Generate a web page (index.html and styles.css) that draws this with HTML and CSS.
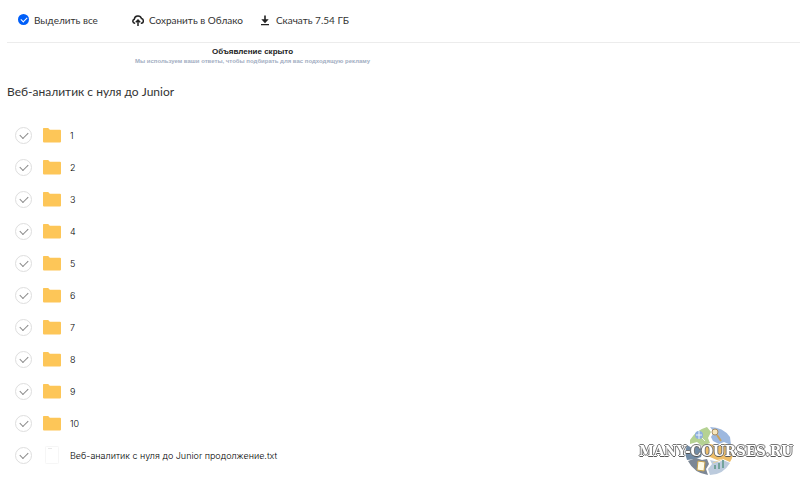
FILE: index.html
```html
<!DOCTYPE html>
<html lang="ru">

<head>
    <meta charset="UTF-8">
    <meta name="viewport" content="width=device-width, initial-scale=1.0">
    <title>Веб-аналитик с нуля до Junior</title>
    <link rel="stylesheet" href="styles.css">
</head>

<body>
    <header class="toolbar">
        <label class="tool select-all">
            <input type="checkbox" class="check-all" checked>
            <span>Выделить все</span>
        </label>
        <button type="button" class="tool save">
            <svg width="12" height="12" viewBox="0 0 12 12" fill="none" stroke="#222" stroke-width="1.5">
                <path d="M3.2 9.3H2.8A2.1 2.1 0 0 1 2.3 5.2A3.7 3.7 0 0 1 9.5 4.6A2.4 2.4 0 0 1 9.4 9.3H8.8" />
                <path d="M6 12V6.2M3.8 8.2L6 6L8.2 8.2" />
            </svg>
            <span>Сохранить в Облако</span>
        </button>
        <button type="button" class="tool">
            <svg width="12" height="12" viewBox="0 0 12 12" fill="#222">
                <path d="M5.2 1.5h1.6v3.8h2.9L6 9.2L2.3 5.3h2.9zM2 9.9h8v1.4h-8z" />
            </svg>
            <span>Скачать 7.54 ГБ</span>
        </button>
    </header>

    <aside class="ad">
        <strong class="ad-title">Объявление скрыто</strong>
        <span class="ad-text">Мы используем ваши ответы, чтобы подбирать для вас подходящую рекламу</span>
    </aside>

    <main>
        <h1>Веб-аналитик с нуля до Junior</h1>
        <ul class="files"></ul>
    </main>

    <div class="watermark">
        <svg class="wheel" width="50" height="50" viewBox="0 0 50 50">
            <path fill="#b5d293" d="M5 14Q11 4 22 1L26 6L23 12L25 17L17 20L12 16L5 18z" />
            <path fill="#9db8df" d="M25 1Q38 1 45 11L46 19L39 16L34 18L28 15L26 11L29 6z" />
            <path fill="#edbd69" d="M18 23L25 18L34 20L40 18L48 22Q49 30 45 36L38 33L32 34L25 31L18 29z" />
            <path fill="#718ba5" d="M2 19L7 22L12 19L18 23L16 31L10 33L2 34Q-1 27 2 19z" />
            <path fill="#7c8795" d="M3 35L11 32L17 34L22 33L24 38L21 43L23 49Q9 47 3 35z" />
            <path fill="#bccbdd" d="M25 49L23 43L27 38L25 34L34 36L38 34L45 37Q38 49 25 49z" />
            <circle cx="14" cy="9" r="4" fill="#8eafe0" />
            <path d="M11 9h6M14 5v8M17 12l3 3" stroke="#edf4f7" fill="none" />
            <circle cx="30" cy="6" r="3" fill="#f7e7bd" stroke="#a88d64" />
            <path d="M32 9l4 6" stroke="#c9a15b" stroke-width="2" />
            <path d="M13 35l7 1l-1 9l-7-1z" fill="#fffbe6" stroke="#c7a24d" />
            <path d="M30 43v-4M34 43v-6M38 42v-8" stroke="#73a39b" stroke-width="2" />
            <path d="M28 37l10-4" stroke="#ead49e" />
        </svg>
        <span class="watermark-text">MANY-COURSES.RU</span>
    </div>

    <script>
        const files = ["1", "2", "3", "4", "5", "6", "7", "8", "9", "10", "Веб-аналитик с нуля до Junior продолжение.txt"];

        const folderIcon = `<svg width="18" height="16" viewBox="0 0 18 16">
            <path fill="#fdc658" d="M0 1.7Q0 1 .7 1H5.2L6.8 2.8H17Q18 2.8 18 3.8V14.5Q18 15.5 17 15.5H1Q0 15.5 0 14.5z" /></svg>`;
        const textIcon = `<svg width="18" height="20" viewBox="0 0 18 20">
            <rect x="2.5" y="1.5" width="13" height="17" rx="1" fill="#fff" stroke="#f6f6f6" />
            <path d="M5 3.5h4" stroke="#e8e8e8" /></svg>`;

        const list = document.querySelector(".files");

        files.forEach((name) => {
            const icon = name.endsWith(".txt") ? textIcon : folderIcon;
            list.innerHTML += `<li><label class="file"><input type="checkbox" class="check">${icon}<span>${name}</span></label></li>`;
        });

        const checkAll = document.querySelector(".check-all");

        checkAll.addEventListener("change", () => {
            document.querySelectorAll(".check").forEach((check) => {
                check.checked = checkAll.checked;
            });
        });
    </script>
</body>

</html>
```
FILE: styles.css
```css
* {
    box-sizing: border-box;
}

body {
    margin: 0;
    padding-left: 7px;
    background: #fff;
    color: #333;
    font-family: "Liberation Sans", sans-serif;
    font-size: 9px;
}

.toolbar {
    display: flex;
    align-items: center;
    gap: 16px;
    height: 43px;
    padding: 0 11px 3px;
    border-bottom: 1px solid #ececec;
}

.tool {
    display: flex;
    align-items: center;
    gap: 5px;
    padding: 0;
    border: 0;
    background: none;
    color: #333;
    font-family: Lato, "Open Sans", sans-serif;
    font-size: 10px;
    line-height: 16px;
    white-space: nowrap;
    cursor: pointer;
}

.select-all {
    margin-right: 18px;
}

input {
    display: grid;
    place-items: center;
    flex: none;
    margin: 0;
    border-radius: 50%;
    appearance: none;
    cursor: pointer;
}

input::before {
    content: "";
    border: solid #b5b5b5;
    border-width: 0 0 1px 1px;
    transform: translateY(-1px) rotate(-45deg);
}

.check-all {
    width: 11px;
    height: 11px;
    background: #b5b5b5;
}

.check-all:checked {
    background: #005ff9;
}

.check-all::before {
    width: 5px;
    height: 3px;
    border-color: #fff;
}

.ad {
    display: flex;
    flex-direction: column;
    align-items: center;
    width: 491px;
    max-width: 100%;
    padding-top: 4px;
    font-weight: bold;
}

.ad-title {
    color: #222;
    font-size: 8px;
    line-height: 9px;
}

.ad-text {
    color: #a3aec2;
    font-size: 6px;
    line-height: 10px;
}

h1 {
    margin: 17px 0 0;
    font-family: Lato, "Open Sans", sans-serif;
    font-size: 12px;
    font-weight: normal;
    line-height: 18px;
}

.files {
    margin: 18px 0 0;
    padding: 0 0 0 8px;
    list-style: none;
    color: #000;
    font-family: Inter, sans-serif;
    font-weight: 300;
}

.file {
    display: flex;
    align-items: center;
    height: 32px;
    cursor: pointer;
}

.file svg {
    margin: 0 9px 0 11px;
}

.check {
    width: 17px;
    height: 17px;
    border: 1px solid #dedede;
}

.check::before {
    width: 7px;
    height: 4px;
    border-color: #888;
}

.watermark {
    position: fixed;
    right: 7px;
    bottom: 7px;
    display: grid;
    align-items: center;
    justify-items: center;
}

.wheel,
.watermark-text {
    grid-area: 1 / 1;
}

.wheel {
    margin-right: 12px;
}

.watermark-text {
    color: #fff;
    font-family: "DejaVu Serif Condensed", "DejaVu Serif", serif;
    font-size: 15px;
    font-weight: bold;
    line-height: 20px;
    text-shadow: 1px 0 #777, -1px 0 #777, 0 1px #555, 0 -1px #777;
}
```
